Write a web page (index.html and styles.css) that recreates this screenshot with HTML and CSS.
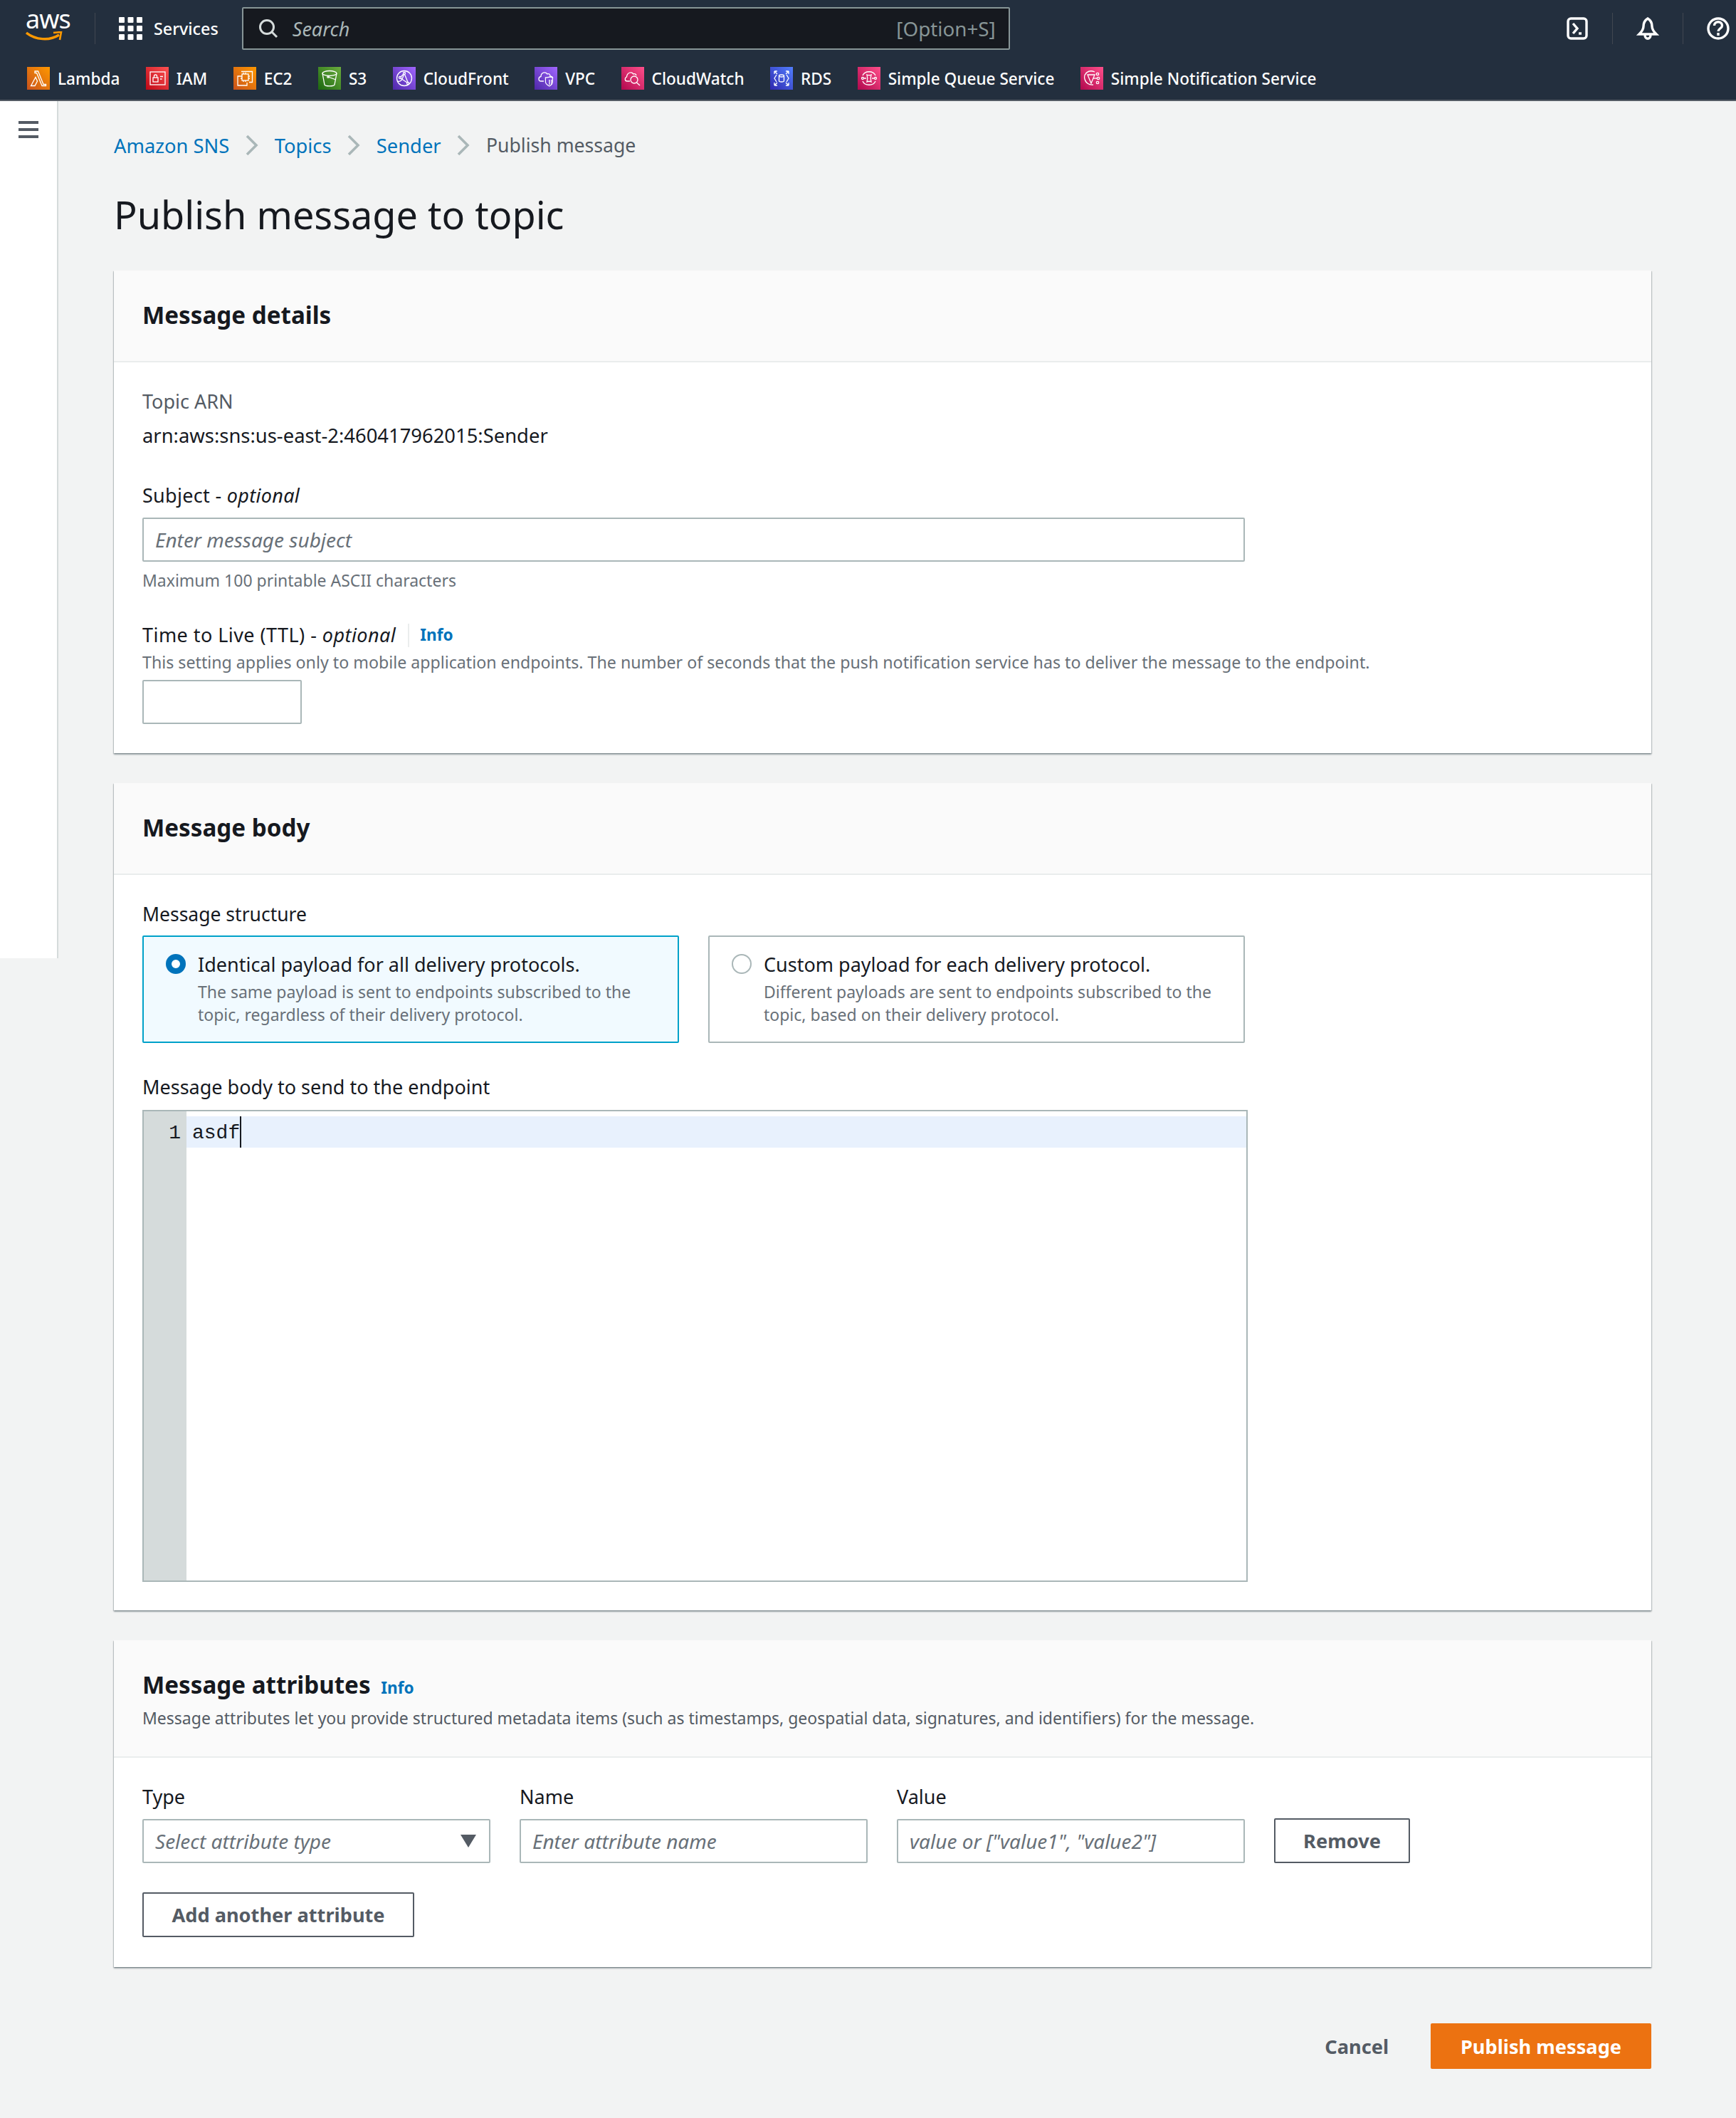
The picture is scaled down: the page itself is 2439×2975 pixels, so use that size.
FILE: index.html
```html
<!DOCTYPE html>
<html>
<head>
  <meta charset="utf-8">
  <title>Publish message to topic</title>
  <link rel="stylesheet" href="styles.css">
</head>
<body>
  <header class="topnav">
    <div class="nav-row">
      <div class="aws-logo">
        <span class="aws-word">aws</span>
        <svg class="aws-smile" viewBox="0 0 52 16"><path d="M1 2c13 10 32 12 46 3" fill="none" stroke="#f90" stroke-width="3.4"/><path d="M39 2l11-1-2 11" fill="none" stroke="#f90" stroke-width="2.6"/></svg>
      </div>
      <span class="nav-sep"></span>
      <div class="services">
        <svg class="grid-icon" viewBox="0 0 33 32" fill="#fff">
          <rect x="0" y="0" width="8" height="8" rx="1"/><rect x="12.500" y="0" width="8" height="8" rx="1"/><rect x="25" y="0" width="8" height="8" rx="1"/>
          <rect x="0" y="12" width="8" height="8" rx="1"/><rect x="12.500" y="12" width="8" height="8" rx="1"/><rect x="25" y="12" width="8" height="8" rx="1"/>
          <rect x="0" y="24" width="8" height="8" rx="1"/><rect x="12.500" y="24" width="8" height="8" rx="1"/><rect x="25" y="24" width="8" height="8" rx="1"/>
        </svg>
        <span>Services</span>
      </div>
      <div class="search">
        <svg class="search-icon" viewBox="0 0 28 28" fill="none" stroke="#d5dbdb" stroke-width="3"><circle cx="12" cy="12" r="9.500"/><path d="M19 19l7 7"/></svg>
        <span class="search-text">Search</span>
        <span class="search-key">[Option+S]</span>
      </div>
      <div class="nav-right">
        <svg class="nav-icon" viewBox="0 0 32 32" fill="none" stroke="#fff" stroke-width="3.400"><rect x="3" y="2" width="26" height="28" rx="4"/><path d="M10 9l6 7-6 7"/><path d="M18 23h4"/></svg>
        <span class="nav-sep"></span>
        <svg class="nav-icon" viewBox="0 0 32 32" fill="none" stroke="#fff" stroke-width="3.400"><path d="M16 2c-5 3-6 7-6 11 0 5-3 8-6 11h24c-3-3-6-6-6-11 0-4-1-8-6-11z"/><path d="M12 25c0 7 8 7 8 0"/></svg>
        <span class="nav-sep"></span>
        <svg class="nav-icon" viewBox="0 0 32 32" fill="none" stroke="#fff" stroke-width="3.400"><circle cx="16" cy="16" r="14"/><path d="M10.500 12c0-7 11-7 11 0 0 4-5.500 4-5.500 8"/><path d="M16 22v4"/></svg>
      </div>
    </div>
    <nav class="fav-row">
      <a class="fav"><span class="tile tile-orange"><svg viewBox="0 0 32 32"><path d="M11 6h4.500l7.500 18.500h3.500v2h-5.500L13.500 8.500H11z"/><path d="M5.500 26.500l6.500-12 2.500 5.500-3.500 6.500z"/></svg></span>Lambda</a>
      <a class="fav"><span class="tile tile-red"><svg viewBox="0 0 32 32"><rect x="6" y="7" width="21" height="18"/><rect x="10" y="15" width="7" height="6"/><path d="M11.500 15v-2a2 2 0 014 0v2"/><path d="M20 13.500h4M20 17h2.500"/></svg></span>IAM</a>
      <a class="fav"><span class="tile tile-orange"><svg viewBox="0 0 32 32"><path d="M11 6.500h15.500v15H22"/><path d="M10 13H6v13h13v-4"/><rect x="12" y="10" width="9" height="9"/><path d="M14 8v2M17 8v2M14 19v2M17 19v2M10 13h2M10 16h2M21 13h2M21 16h2"/></svg></span>EC2</a>
      <a class="fav"><span class="tile tile-green"><svg viewBox="0 0 32 32"><ellipse cx="16" cy="9" rx="10" ry="3.500"/><path d="M6 9l3 16c1 2.500 13 2.500 14 0l3-16"/><path d="M14 14l11 4"/><circle cx="14" cy="14" r="1.200"/></svg></span>S3</a>
      <a class="fav"><span class="tile tile-purple"><svg viewBox="0 0 32 32"><circle cx="16" cy="16" r="10.500"/><circle cx="16" cy="9" r="1.500"/><circle cx="10" cy="15" r="1.500"/><circle cx="21" cy="23" r="1.500"/><path d="M15 10l-4 4M11 16l9 6M16.500 10.500l4.500 11M6 20c4 1 7 0 9-9"/></svg></span>CloudFront</a>
      <a class="fav"><span class="tile tile-purple"><svg viewBox="0 0 32 32"><path d="M13 20H9c-4 0-4-6 0-6.500C9 8 15 6 18 10c2-1 4 0 4 3 1 0 3 .500 4 2.500"/><path d="M16 16c3 0 6-1 7-1s3 1 4 1v6c0 3-3 5-5 6-2-1-6-3-6-6z" transform="translate(1 -1) scale(.9 1)"/><path d="M21 18v7M24 18v7"/></svg></span>VPC</a>
      <a class="fav"><span class="tile tile-pink"><svg viewBox="0 0 32 32"><path d="M12 20H8c-3.500 0-3.500-5-.5-6C8 8 14 6 17 10c1.500-1 3.500 0 4 2"/><circle cx="18" cy="18" r="5"/><path d="M21.500 22l4.500 4"/></svg></span>CloudWatch</a>
      <a class="fav"><span class="tile tile-blue"><svg viewBox="0 0 32 32"><ellipse cx="16" cy="12.500" rx="3.500" ry="1.500"/><path d="M12.500 12.500v7c0 2 7 2 7 0v-7"/><path d="M9 11l-3 5 3 5M23 11l3 5-3 5"/><path d="M6 6l4 4M6 6h4M6 6v4M26 6l-4 4M26 6h-4M26 6v4M6 26l4-4M6 26h4M6 26v-4M26 26l-4-4M26 26h-4M26 26v-4"/></svg></span>RDS</a>
      <a class="fav"><span class="tile tile-pink"><svg viewBox="0 0 32 32"><path d="M7 12c3-7 15-7 18 0M7 20c3 7 15 7 18 0"/><circle cx="7" cy="16" r="1.500"/><circle cx="25" cy="16" r="1.500"/><path d="M13 11c2 1 4 1 6 0-1 3-1 7 0 10-2-1-4-1-6 0 1-3 1-7 0-10zM9 16h3M20 16h3"/></svg></span>Simple Queue Service</a>
      <a class="fav"><span class="tile tile-pink"><svg viewBox="0 0 32 32"><path d="M20 7C11 3 4 10 6 17c1 5 6 9 12 8"/><path d="M10 11h10l-5 12z"/><circle cx="24" cy="10" r="1.700"/><circle cx="25" cy="16" r="1.700"/><circle cx="24" cy="22" r="1.700"/><path d="M18 16h5"/></svg></span>Simple Notification Service</a>
    </nav>
  </header>

  <div class="layout">
    <aside class="sidebar">
      <svg class="burger" viewBox="0 0 28 24" fill="#545b64"><rect width="28" height="4"/><rect y="10" width="28" height="4"/><rect y="20" width="28" height="4"/></svg>
    </aside>

    <main class="content">
      <div class="crumbs">
        <a class="link">Amazon SNS</a>
        <svg class="crumb-sep" viewBox="0 0 18 30" fill="none" stroke="#aab7b8" stroke-width="3.600"><path d="M2 2l13 13L2 28"/></svg>
        <a class="link">Topics</a>
        <svg class="crumb-sep" viewBox="0 0 18 30" fill="none" stroke="#aab7b8" stroke-width="3.600"><path d="M2 2l13 13L2 28"/></svg>
        <a class="link">Sender</a>
        <svg class="crumb-sep" viewBox="0 0 18 30" fill="none" stroke="#aab7b8" stroke-width="3.600"><path d="M2 2l13 13L2 28"/></svg>
        <span class="crumb-now">Publish message</span>
      </div>

      <h1>Publish message to topic</h1>

      <section class="card">
        <div class="card-head">
          <h2>Message details</h2>
        </div>
        <div class="card-body">
          <div class="label muted-label">Topic ARN</div>
          <div class="label arn">arn:aws:sns:us-east-2:460417962015:Sender</div>

          <label class="label subject-label">Subject - <i>optional</i></label>
          <input class="input subject-input" type="text" placeholder="Enter message subject">
          <div class="hint hint-below">Maximum 100 printable ASCII characters</div>

          <div class="label ttl-label">Time to Live (TTL) - <i>optional</i><span class="info-sep"></span><a class="info">Info</a></div>
          <div class="hint ttl-hint">This setting applies only to mobile application endpoints. The number of seconds that the push notification service has to deliver the message to the endpoint.</div>
          <input class="input ttl-input" type="text">
        </div>
      </section>

      <section class="card">
        <div class="card-head">
          <h2>Message body</h2>
        </div>
        <div class="card-body body-two">
          <div class="label structure-label">Message structure</div>
          <div class="tiles">
            <div class="choice choice-on">
              <span class="radio radio-on"></span>
              <div>
                <div class="choice-title">Identical payload for all delivery protocols.</div>
                <div class="hint choice-desc">The same payload is sent to endpoints subscribed to the topic, regardless of their delivery protocol.</div>
              </div>
            </div>
            <div class="choice">
              <span class="radio"></span>
              <div>
                <div class="choice-title">Custom payload for each delivery protocol.</div>
                <div class="hint choice-desc">Different payloads are sent to endpoints subscribed to the topic, based on their delivery protocol.</div>
              </div>
            </div>
          </div>
          <div class="label editor-label">Message body to send to the endpoint</div>
          <div class="editor">
            <div class="gutter"><div class="line-no">1</div></div>
            <div class="code">
              <div class="active-line"><span class="code-text">asdf</span><span class="cursor"></span></div>
            </div>
          </div>
        </div>
      </section>

      <section class="card">
        <div class="card-head head-tall">
          <h2>Message attributes <a class="info info-head">Info</a></h2>
          <div class="hint head-desc">Message attributes let you provide structured metadata items (such as timestamps, geospatial data, signatures, and identifiers) for the message.</div>
        </div>
        <div class="card-body body-three">
          <div class="attr-row">
            <div class="attr-grid">
              <div>
                <div class="label">Type</div>
                <div class="input select">
                  <span>Select attribute type</span>
                  <svg class="caret" viewBox="0 0 22 18" fill="#545b64"><path d="M0 0h22L11 18z"/></svg>
                </div>
              </div>
              <div>
                <div class="label">Name</div>
                <input class="input attr-input" type="text" placeholder="Enter attribute name">
              </div>
              <div>
                <div class="label">Value</div>
                <input class="input attr-input" type="text" placeholder="value or [&quot;value1&quot;, &quot;value2&quot;]">
              </div>
            </div>
            <button class="btn btn-remove">Remove</button>
          </div>
          <button class="btn btn-add">Add another attribute</button>
        </div>
      </section>

      <div class="actions">
        <a class="cancel">Cancel</a>
        <button class="btn btn-primary">Publish message</button>
      </div>
    </main>
  </div>
</body>
</html>
```

FILE: styles.css
```css
* {
  box-sizing: border-box;
}

body {
  margin: 0;
  min-height: 2975px;
  background-color: #f2f3f3;
  color: #16191f;
  font-family: "Noto Sans", "Open Sans", sans-serif;
  font-size: 27px;
}

/* top bar */
.topnav {
  height: 142px;
  background-color: #232f3e;
  border-bottom: 2px solid #545b64;
  color: #fff;
}

.nav-row {
  display: flex;
  align-items: center;
  height: 80px;
  padding-left: 36px;
}

.aws-logo {
  position: relative;
  width: 52px;
  height: 44px;
}

.aws-word {
  display: block;
  font-size: 36px;
  line-height: 30px;
  margin-top: -6px;
  letter-spacing: -1px;
}

.aws-smile {
  display: block;
  width: 52px;
  height: 16px;
  margin-top: 2px;
}

.nav-sep {
  width: 1px;
  height: 44px;
  background-color: #414750;
}

.aws-logo + .nav-sep {
  margin-left: 45px;
}

.services {
  display: flex;
  align-items: center;
  margin-left: 33px;
  font-size: 23.300px;
  font-weight: 500;
}

.grid-icon {
  width: 33px;
  height: 32px;
  margin-right: 16px;
}

.search {
  display: flex;
  align-items: center;
  width: 1079px;
  height: 60px;
  margin-left: 33px;
  padding: 0 18px 0 21px;
  background-color: #16191f;
  border: 2px solid #879596;
  border-radius: 2px;
}

.search-icon {
  width: 28px;
  height: 28px;
}

.search-text {
  margin-left: 20px;
  color: #aab7b8;
  font-style: italic;
}

.search-key {
  margin-left: auto;
  color: #879596;
  font-size: 27.800px;
}

.nav-right {
  display: flex;
  align-items: center;
  margin-left: auto;
  gap: 33px;
  padding-right: 9px;
}

.nav-icon {
  width: 32px;
  height: 32px;
}

.fav-row {
  display: flex;
  align-items: center;
  gap: 36.400px;
  height: 60px;
  padding-left: 38px;
}

.fav {
  display: flex;
  align-items: center;
  gap: 11px;
  font-size: 22.600px;
  font-weight: 500;
}

.tile {
  display: block;
  width: 32px;
  height: 32px;
}

.tile svg {
  display: block;
  width: 32px;
  height: 32px;
  fill: none;
  stroke: #fff;
  stroke-width: 1.300;
}

.tile-orange {
  background: linear-gradient(45deg, #c8511b, #f90);
}

.tile-red {
  background: linear-gradient(45deg, #bd0816, #ff5252);
}

.tile-green {
  background: linear-gradient(45deg, #1b660f, #6cae3e);
}

.tile-purple {
  background: linear-gradient(45deg, #4d27a8, #a166ff);
}

.tile-pink {
  background: linear-gradient(45deg, #b0084d, #ff4f8b);
}

.tile-blue {
  background: linear-gradient(45deg, #2e27ad, #527fff);
}

/* page */
.layout {
  display: flex;
  align-items: flex-start;
}

.sidebar {
  flex: none;
  width: 82px;
  height: 1204px;
  background-color: #fff;
  border-right: 2px solid #d5dbdb;
  padding: 28px 0 0 26px;
}

.burger {
  display: block;
  width: 28px;
  height: 24px;
}

.content {
  flex: 1;
  min-width: 0;
  padding: 42px 119px 0 78px;
}

.crumbs {
  display: flex;
  align-items: center;
  height: 40px;
  font-size: 27.300px;
}

.link,
.info {
  color: #0073bb;
}

.crumb-sep {
  width: 18px;
  height: 30px;
  margin: 0 22.700px;
}

.crumb-now {
  color: #545b64;
  font-size: 26.600px;
}

h1 {
  margin: 45px 0 47px;
  font-size: 54px;
  font-weight: 400;
  line-height: 64px;
}

.card {
  margin-bottom: 42px;
  background-color: #fff;
  box-shadow: 0 2px 2px rgba(0, 28, 36, 0.3), 1px 1px 1px rgba(0, 28, 36, 0.15), -1px 1px 1px rgba(0, 28, 36, 0.15);
}

.card-head {
  height: 129px;
  padding: 39px 40px 0;
  background-color: #fafafa;
  border-bottom: 2px solid #eaeded;
}

.head-tall {
  height: 165px;
  padding-top: 39px;
}

h2 {
  margin: 0;
  font-size: 33.200px;
  font-weight: 700;
  line-height: 48px;
}

.card-body {
  padding: 35px 40px 41px;
}

.label {
  line-height: 40px;
}

.muted-label {
  color: #545b64;
}

.arn {
  margin-top: 8px;
  font-size: 27.400px;
}

.subject-label {
  display: block;
  margin-top: 44px;
  letter-spacing: 0.3px;
}

.input {
  display: block;
  height: 62px;
  padding: 0 16px;
  background-color: #fff;
  border: 2px solid #aab7b8;
  border-radius: 2px;
  color: #16191f;
  font-family: inherit;
  font-size: 28px;
}

.input::placeholder {
  color: #687078;
  font-style: italic;
  opacity: 1;
}

.subject-input {
  width: 1549px;
  margin-top: 11px;
}

.hint {
  color: #687078;
  font-size: 23px;
  line-height: 36px;
}

.hint-below {
  margin-top: 8px;
}

.ttl-label {
  display: flex;
  align-items: center;
  margin-top: 39px;
  white-space: pre;
  letter-spacing: 0.450px;
}

.info-sep {
  width: 2px;
  height: 33px;
  margin: 0 15px 0 17px;
  background-color: #eaeded;
}

.info {
  font-size: 22.600px;
  font-weight: 700;
  letter-spacing: 0;
}

.ttl-hint {
  margin-top: 0;
  font-size: 23.200px;
}

.ttl-input {
  width: 224px;
  margin-top: 7px;
}

.body-two {
  padding-bottom: 40px;
}

.structure-label {
  font-size: 26.500px;
}

.tiles {
  display: grid;
  grid-template-columns: 754px 754px;
  gap: 41px;
  margin-top: 10px;
}

.choice {
  display: flex;
  height: 151px;
  padding: 19px 30px 0 31px;
  border: 2px solid #aab7b8;
  border-radius: 2px;
}

.choice-on {
  background-color: #f1faff;
  border-color: #00a1c9;
}

.radio {
  flex: none;
  width: 28px;
  height: 28px;
  margin: 5px 17px 0 0;
  background-color: #fff;
  border: 2px solid #aab7b8;
  border-radius: 50%;
}

.radio-on {
  border: 8px solid #0073bb;
}

.choice-title {
  line-height: 40px;
}

.choice-desc {
  margin-top: 2px;
  line-height: 32px;
}

.editor-label {
  margin-top: 42px;
}

.editor {
  display: flex;
  width: 1553px;
  height: 663px;
  margin-top: 12px;
  border: 2px solid #aab7b8;
}

.gutter {
  flex: none;
  width: 60px;
  background-color: #d5dbdb;
  padding-top: 9px;
}

.line-no,
.code-text {
  font-family: "Liberation Mono", monospace;
  font-size: 28px;
  line-height: 44px;
}

.line-no {
  padding-right: 8px;
  text-align: right;
}

.code {
  flex: 1;
  padding-top: 7px;
}

.active-line {
  display: flex;
  height: 44px;
  padding-left: 8px;
  background-color: #e8f1fd;
}

.code-text {
  padding-top: 2px;
}

.cursor {
  width: 2px;
  height: 44px;
  background-color: #16191f;
}

.body-three {
  padding-bottom: 42px;
}

h2 .info-head {
  margin-left: 6px;
}

.head-desc {
  margin-top: 0;
  color: #545b64;
}

.attr-row {
  display: flex;
  align-items: flex-end;
  gap: 41px;
}

.attr-grid {
  display: grid;
  grid-template-columns: repeat(3, 489px);
  gap: 41px;
  width: 1549px;
}

.attr-grid .input {
  margin-top: 11px;
}

.attr-input {
  width: 100%;
}

.select {
  display: flex;
  align-items: center;
  justify-content: space-between;
  color: #687078;
  font-style: italic;
}

.caret {
  width: 22px;
  height: 18px;
  margin-right: 2px;
}

.btn {
  height: 63px;
  border: 2px solid #545b64;
  border-radius: 2px;
  background-color: #fff;
  color: #545b64;
  font-family: inherit;
  font-size: 27.200px;
  font-weight: 700;
}

.btn-remove {
  width: 191px;
}

.btn-add {
  display: block;
  width: 382px;
  margin-top: 41px;
}

.actions {
  display: flex;
  align-items: center;
  justify-content: flex-end;
  gap: 59px;
  margin-top: 79px;
}

.cancel {
  color: #545b64;
  font-size: 27.200px;
  font-weight: 700;
}

.btn-primary {
  width: 310px;
  height: 64px;
  border-color: #ec7211;
  background-color: #ec7211;
  color: #fff;
}
```
